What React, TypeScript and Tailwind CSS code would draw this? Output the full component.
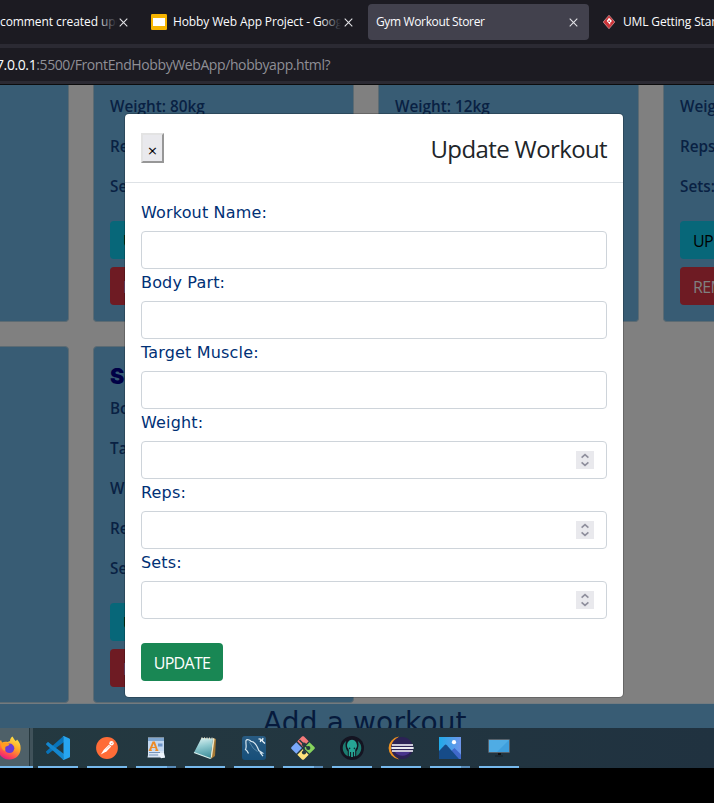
import React from "react";

const SEGOE = "font-['Open_Sans','Noto_Sans',sans-serif]";
const VERDANA = "font-['DejaVu_Sans',Verdana,sans-serif]";

function TabClose({ className = "" }: { className?: string }) {
  return (
    <svg className={`h-[9px] w-[9px] shrink-0 ${className}`} viewBox="0 0 9 9">
      <path d="M.7.7l7.6 7.6M8.3.7L.7 8.3" stroke="#e4e4e8" strokeWidth="1.05" fill="none" />
    </svg>
  );
}

function TabBar() {
  return (
    <div className="flex h-11 items-center overflow-hidden bg-[#1c1b22] text-[12px] whitespace-nowrap text-[#fbfbfe]">
      <div className="relative mr-[2px] w-[117px] shrink-0 overflow-hidden">
        <span className="block tracking-[-0.08px]">comment created upd</span>
        <span className="absolute inset-y-0 right-0 w-5 bg-gradient-to-r from-transparent to-[#1c1b22]" />
      </div>
      <TabClose />
      <svg className="ml-[23px] h-4 w-4 shrink-0" viewBox="0 0 16 16">
        <rect width="16" height="16" rx="1.3" fill="#f6b400" />
        <rect x="2" y="4" width="12" height="8" fill="#fff" />
      </svg>
      <div className="relative mr-[3px] ml-[6px] w-[168px] shrink-0 overflow-hidden">
        <span className="block tracking-[-0.12px]">Hobby Web App Project - Goog</span>
        <span className="absolute inset-y-0 right-0 w-5 bg-gradient-to-r from-transparent to-[#1c1b22]" />
      </div>
      <TabClose />
      <div className="ml-[15px] flex h-9 w-[221px] shrink-0 items-center justify-between rounded bg-[#42414d] pr-[11px] pl-2">
        <span className="tracking-[-0.36px]">Gym Workout Storer</span>
        <TabClose />
      </div>
      <svg className="ml-[14px] h-[14px] w-3 shrink-0" viewBox="0 0 12 14">
        <path d="M6 .2L11.8 7 6 13.8.2 7z" fill="#cc3338" stroke="#e8b5b5" strokeWidth=".6" />
        <path d="M6 2.800L9 6 7.200 7.700V9.800L3.700 6z" fill="#fff" />
        <path d="M5.500 5.500h1.400v1.400H5.500z" fill="#cc3338" />
      </svg>
      <span className="ml-2 tracking-[-0.15px]">UML Getting Started</span>
    </div>
  );
}

function AddressBar() {
  return (
    <div className="flex h-[41px] items-center overflow-hidden border-y-4 border-t-[#2b2a33] border-b-[#2b2a33] bg-[#1c1b22] text-[14px] whitespace-nowrap text-[#8f8f96]">
      <span className="-ml-[4px] tracking-[-0.4px]">
        <span className="text-[#fbfbfe]">7.0.0.1</span>:5500/FrontEndHobbyWebApp/hobbyapp.html?
      </span>
    </div>
  );
}

function WorkoutCard({ title, lines, tall = false }: { title?: string; lines: string[]; tall?: boolean }) {
  return (
    <article
      className={`flex w-[261px] shrink-0 flex-col border-x border-b border-[#5c6b73] bg-[#385c74] px-4 ${
        tall ? "h-[357px] rounded border-t pt-4 pb-[15px]" : "h-[237px] rounded-b pt-[9px] pb-4"
      }`}
    >
      {title && (
        <h5 className="mb-2 h-[25px] font-['Inter',sans-serif] text-[21.5px] leading-[27px] font-black text-[#000046]">
          {title}
        </h5>
      )}
      {lines.map((line, i) => (
        <p key={i} className="mb-4 h-6 text-[15.3px] leading-6 font-semibold whitespace-nowrap text-[#092143]">
          {line}
        </p>
      ))}
      <div className="mt-auto flex flex-col items-start gap-2 text-[16px] tracking-[-0.6px]">
        <span className="flex h-[38px] items-center rounded bg-[#076779] px-[13px] pt-[2px] text-black">UPDATE</span>
        <span className="flex h-[38px] items-center rounded bg-[#6e1b23] px-[13px] pt-[2px] text-[#808080]">REMOVE</span>
      </div>
    </article>
  );
}

function Field({ label, numeric = false }: { label: string; numeric?: boolean }) {
  return (
    <div>
      <div className={`mb-2 h-6 text-[16px] leading-[27px] tracking-[0.17px] text-[#003075] ${VERDANA}`}>{label}</div>
      <div className="flex h-[38px] items-center justify-end rounded border border-[#ced4da] bg-white pr-3">
        {numeric && (
          <svg className="h-[18px] w-[18px]" viewBox="0 0 18 18">
            <rect width="18" height="18" fill="#e9e9ed" />
            <path d="M5.600 6.700L9 3.700l3.400 3M5.600 11.300l3.400 3 3.400-3" stroke="#8f8f9d" strokeWidth="1.700" fill="none" />
          </svg>
        )}
      </div>
    </div>
  );
}

function UpdateModal() {
  return (
    <section className="absolute top-[29px] left-[125px] w-[498px] rounded bg-white shadow-[0_0_0_1px_rgba(0,0,0,0.2)]">
      <header className="flex h-[69px] items-start justify-between border-b border-[#dee2e6] px-4">
        <span className="mt-[19px] flex h-[30px] w-[23px] items-center justify-center border-2 border-t-[#e3e3e3] border-r-[#979797] border-b-[#979797] border-l-[#e3e3e3] bg-[#e9e9ed] pt-[4px]">
          <span className="font-['DejaVu_Sans',sans-serif] text-[13px] leading-none text-black">×</span>
        </span>
        <h4 className="mt-[17px] text-[24px] leading-9 tracking-[-0.62px] text-[#212529]">Update Workout</h4>
      </header>
      <div className="p-4">
        <Field label="Workout Name:" />
        <Field label="Body Part:" />
        <Field label="Target Muscle:" />
        <Field label="Weight:" numeric />
        <Field label="Reps:" numeric />
        <Field label="Sets:" numeric />
        <button className="mt-6 flex h-[38px] w-[82px] items-center justify-center rounded bg-[#198754] pt-[2px] text-[16px] tracking-[-0.7px] text-white">
          UPDATE
        </button>
      </div>
    </section>
  );
}

function Page() {
  return (
    <main className="relative flex h-[643px] flex-col overflow-hidden border-t border-[#0c0c0d] bg-[#808080] -mt-px h-[644px]">
      <div className="ml-[-192px] flex gap-6">
        <WorkoutCard lines={["", "", ""]} />
        <WorkoutCard lines={["Weight: 80kg", "Reps: 8", "Sets: 3"]} />
        <WorkoutCard lines={["Weight: 12kg", "Reps: 12", "Sets: 3"]} />
        <WorkoutCard lines={["Weight: 40kg", "Reps: 10", "Sets: 3"]} />
      </div>
      <div className="mt-6 ml-[-192px] flex gap-6">
        <WorkoutCard tall lines={["", "", "", "", ""]} />
        <WorkoutCard
          tall
          title="Squat"
          lines={["Body Part: Legs", "Target Muscle: Quads", "Weight: 60kg", "Reps: 8", "Sets: 3"]}
        />
      </div>
      <footer className="h-[30px] shrink-0 overflow-hidden border-t border-[#737b80] bg-[#385c74]">
        <h3 className={`ml-[263px] text-[28px] leading-[37px] tracking-[0.15px] whitespace-nowrap text-[#061a3c] ${VERDANA}`}>
          Add a workout
        </h3>
      </footer>
      <UpdateModal />
    </main>
  );
}

function Firefox() {
  return (
    <svg className="h-6 w-6" viewBox="0 0 24 24">
      <defs>
        <linearGradient id="fx" x1=".8" y1="0" x2=".3" y2="1">
          <stop offset="0" stopColor="#ffe94a" />
          <stop offset=".45" stopColor="#ffa325" />
          <stop offset=".75" stopColor="#ff4f4e" />
          <stop offset="1" stopColor="#e31587" />
        </linearGradient>
      </defs>
      <path d="M15.5.5c1 2 2 3 3 4.500 1-.3 1.300-1 1.500-1.500 3 3 4 6 3.500 10.500C22.700 20 17.500 24 12 23.500 5.500 23.500 1 18.500.800 12.500.700 9 2 6 4 4l1 2.500c2-1 4-1 5.500-.500L13 5c0-2 1-3.500 2.500-4.500z" fill="url(#fx)" />
      <circle cx="12.500" cy="12.300" r="4.800" fill="#6b3bd5" />
      <path d="M4 7.500c3-1.500 6-.5 8.500.8-.5 1.700-2.500 1.500-4 2.500-.7 1.500.5 3.500-.8 4C5 14 4 10.500 4 7.500z" fill="#ff9d20" />
    </svg>
  );
}

function VSCode() {
  return (
    <svg className="h-6 w-6" viewBox="0 0 24 24">
      <path d="M17.500.5L18 6 6 15l-3.500 2.700c-.4.3-.9.3-1.300 0L.300 16.600c-.4-.4-.4-1 0-1.400L17.500 0z" fill="#0873b9" />
      <path d="M17.500 24L.300 8.800c-.4-.4-.4-1 0-1.400l1.100-1c.4-.4.9-.4 1.300 0L18 18z" fill="#1487cf" />
      <path d="M17.300.2c.3-.2.7-.2 1 0l5 2.300c.5.3.7.6.7 1.100v16.800c0 .5-.2.8-.7 1.100l-5 2.300c-.8.3-1.500.1-2-.6.600.4 1.200.1 1.200-.7V1.500c0-.8-.6-1.100-1.200-.7z" fill="#27a5f0" />
    </svg>
  );
}

function Postman() {
  return (
    <svg className="h-[22px] w-[22px]" viewBox="0 0 22 22">
      <circle cx="11" cy="11" r="10.900" fill="#ff6c37" />
      <path d="M4.800 17.400l3-4.600 5-5 2.400 1.700-4.500 4.800z" fill="#fff" />
      <path d="M12.800 8.300l1.300 1.100-5.300 4.200z" fill="#ffd3c3" />
      <circle cx="15.500" cy="6.200" r="2.200" fill="#fff" />
      <path d="M15 6.800l1.600-.8" stroke="#ff6c37" strokeWidth=".7" />
    </svg>
  );
}

function WordPad() {
  return (
    <svg className="h-[22px] w-[18px]" viewBox="0 0 18 22">
      <path d="M1 .5h16v17.500l1 2.500H.5L1 18z" fill="#d7e4f3" />
      <path d="M1 1h16v3H1z" fill="#7fa6d0" />
      <path d="M1 4h16v10H1z" fill="#c3d8f0" />
      <path d="M11 6.500h4.500v3H11z" fill="#6f96ca" />
      <path d="M3 13.200L6.200 5.500h1L10 13.200" stroke="#ed8b25" strokeWidth="1.900" fill="none" />
      <path d="M1.800 13.300h3M8.300 13.300h3M4.200 10.500h4.500" stroke="#ed8b25" strokeWidth="1.200" />
      <path d="M2 15.500h11M2 18h9" stroke="#7695bb" />
      <path d="M11 16h6l1 4.500-4 .8z" fill="#eef5fc" />
    </svg>
  );
}

function Notepad() {
  return (
    <svg className="h-6 w-6" viewBox="0 0 24 24">
      <defs>
        <linearGradient id="np" x1=".4" y1="0" x2=".6" y2="1">
          <stop stopColor="#d5eeee" />
          <stop offset=".4" stopColor="#8fc9cf" />
          <stop offset="1" stopColor="#3d8d99" />
        </linearGradient>
      </defs>
      <path d="M20 2l3 1-1 17-4 3z" fill="#a47834" />
      <path d="M20 2l1.600.8L19 21l-2 2z" fill="#eee7c8" />
      <path d="M8.500 2l11.500.5L17.500 22.500 1 16.500z" fill="url(#np)" />
      <path d="M1 16.500l16.500 6" stroke="#d9f0ee" strokeWidth="1.300" />
      <path d="M9 1.200v2M11.500 1.300v2M14 1.400v2M16.500 1.500v2M19 1.500v2" stroke="#ebe5ce" strokeWidth=".9" />
    </svg>
  );
}

function Workbench() {
  return (
    <svg className="h-6 w-6" viewBox="0 0 24 24">
      <defs>
        <linearGradient id="wb" x2="0" y2="1">
          <stop stopColor="#285b82" />
          <stop offset="1" stopColor="#174f79" />
        </linearGradient>
      </defs>
      <rect width="24" height="24" rx="3" fill="url(#wb)" />
      <path d="M6.500 17.500c-1-2.500-1.500-3-3-4C5 11 3.500 8 4 4.500 5 2.800 7.500 4 9 5.300c4.500.2 6.200 5.200 7.800 9.200l3.700 2.500-2 .1 2.500 3" fill="none" stroke="#d7e7f0" strokeWidth="1.200" />
      <path d="M7 5.500l2.500 4 2 3 4 3" fill="none" stroke="#6f9dba" strokeWidth=".7" />
      <path d="M16.500 2.800l2 .4 1.800 1.800.7-3M20.300 5l2.700 2.500M18.800 3.500L18.300 6" stroke="#e3eef5" strokeWidth="1.300" fill="none" />
    </svg>
  );
}

function GitGui() {
  return (
    <svg className="h-6 w-6" viewBox="0 0 24 24">
      <path d="M11 .6c.6-.6 1.400-.6 2 0l4.700 4.700L12 11 6.300 5.300z" fill="#f47a7a" />
      <path d="M18.500 6.300l4.900 4.700c.6.6.6 1.400 0 2l-4.900 4.700L12.700 12z" fill="#86d45d" />
      <path d="M12 13l5.700 5.700-4.700 4.700c-.6.6-1.400.6-2 0l-4.700-4.700z" fill="#ffe37c" />
      <path d="M5.300 6.300L11 12l-5.700 5.700L.600 13c-.6-.6-.6-1.400 0-2z" fill="#7aa8fa" />
      <path d="M8.500 4L13 8.500v8M13 9l4 3" stroke="#263b40" strokeWidth="1.500" fill="none" />
      <circle cx="13" cy="8.500" r="2.100" fill="#263b40" />
      <circle cx="13" cy="16.500" r="2.100" fill="#263b40" />
      <circle cx="17.300" cy="12" r="2.100" fill="#263b40" />
    </svg>
  );
}

function GitKraken() {
  return (
    <svg className="h-6 w-6" viewBox="0 0 24 24">
      <circle cx="12" cy="12" r="12" fill="#141421" />
      <path d="M6.300 4.700a9.300 9.300 0 0 0 1.500 15.600v-4.800C6 13.500 4.600 9 6.300 4.700zM17.700 4.700a9.300 9.300 0 0 1-1.500 15.600v-4.800c1.800-2 3.200-6.500 1.500-10.800z" fill="#1c7c70" />
      <path d="M12 3.800c3.300 0 5 3.200 5 6 0 2.200-1.800 3-1.800 4.700v5.700h-1.300v-4.200h-1v5h-1.800v-5h-1v4.200H8.800v-5.700C8.800 12.800 7 12 7 9.800c0-2.800 1.700-6 5-6z" fill="#26a595" />
      <circle cx="9.600" cy="12.400" r=".8" fill="#102c32" />
      <circle cx="14.400" cy="12.400" r=".8" fill="#102c32" />
    </svg>
  );
}

function Eclipse() {
  return (
    <svg className="h-6 w-[26px]" viewBox="0 0 26 24">
      <path d="M11 .6A12 11.500 0 0 0 11 23.400 15 15 0 0 1 11 .6z" fill="#ee9220" />
      <circle cx="14" cy="12" r="11" fill="#2c2255" />
      <path d="M7 16h15c-3 5-12 5-15 0z" fill="#48348c" />
      <path d="M4 9h21M3.500 12h22M4 15h21" stroke="#cac7d7" strokeWidth="1.900" />
      <path d="M3.500 12h22" stroke="#fff" strokeWidth="1.300" />
    </svg>
  );
}

function Photos() {
  return (
    <svg className="h-[22px] w-[22px]" viewBox="0 0 22 22">
      <defs>
        <linearGradient id="sky">
          <stop stopColor="#20aae9" />
          <stop offset="1" stopColor="#6f95ea" />
        </linearGradient>
      </defs>
      <path d="M0 0h22v22H0z" fill="url(#sky)" />
      <path d="M11 15l4.500-4 6.500 6.500V22H11z" fill="#4069cb" />
      <path d="M0 14l5.500-5.800c.8-.8 1.500-.8 2.300 0L20 22H0z" fill="#164b88" />
      <circle cx="15" cy="5.200" r="2.100" fill="#fff" />
    </svg>
  );
}

function Monitor() {
  return (
    <svg className="h-[18px] w-[22px]" viewBox="0 0 22 18">
      <rect x=".5" y=".5" width="21" height="13" rx=".4" fill="#3f9fdd" stroke="#57616b" />
      <path d="M1 1h20L9 13H1z" fill="#57b2e7" opacity=".7" />
      <path d="M10 14h3v2h-3z" fill="#111" />
      <path d="M7 17h8" stroke="#17212a" />
    </svg>
  );
}

const apps = [
  { name: "vscode", icon: <VSCode />, split: false },
  { name: "postman", icon: <Postman />, split: false },
  { name: "wordpad", icon: <WordPad />, split: true },
  { name: "notepad", icon: <Notepad />, split: false },
  { name: "workbench", icon: <Workbench />, split: false },
  { name: "git", icon: <GitGui />, split: true },
  { name: "kraken", icon: <GitKraken />, split: false },
  { name: "eclipse", icon: <Eclipse />, split: false },
  { name: "photos", icon: <Photos />, split: true },
  { name: "monitor", icon: <Monitor />, split: false },
];

function Taskbar() {
  return (
    <nav className="flex h-10 bg-gradient-to-r from-[#243940] to-[#203240]">
      <div className="flex w-[33px] shrink-0 border-b-2 border-[#76b9ed]">
        <div className="flex w-[29px] shrink-0 items-center overflow-hidden bg-[#4e6068] pt-[2px]">
          <span className="-ml-[3px] shrink-0">
            <Firefox />
          </span>
        </div>
        <div className="w-1 border-l border-[#26373d] bg-[#40525a]" />
      </div>
      <div className="ml-[5px] flex gap-[9px]">
        {apps.map((app) => (
          <div key={app.name} className="flex w-10 flex-col">
            <div className="flex h-[38px] items-center justify-center pt-[2px]">{app.icon}</div>
            <div className="flex h-[2px] bg-[#76b9ed]">{app.split && <span className="ml-auto w-[9px] bg-[#588bb8]" />}</div>
          </div>
        ))}
      </div>
    </nav>
  );
}

export default function App() {
  return (
    <div className={`h-[803px] w-[714px] overflow-hidden bg-black ${SEGOE}`}>
      <TabBar />
      <AddressBar />
      <Page />
      <Taskbar />
    </div>
  );
}
